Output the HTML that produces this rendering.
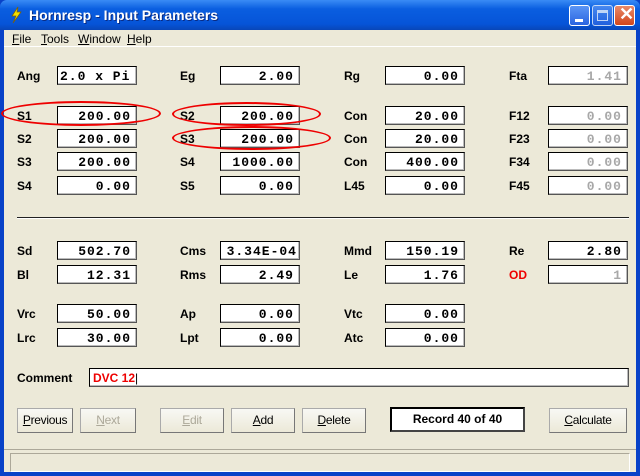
<!DOCTYPE html>
<html><head><style>
*{margin:0;padding:0;box-sizing:border-box}
body{width:640px;height:476px;overflow:hidden;background:#0842c8;font-family:"Liberation Sans",Arial,sans-serif;position:relative}
.title{position:absolute;left:0;top:0;width:640px;height:30px;background:linear-gradient(#3a8cf5,#0a5ee0 30%,#0654d8 80%,#0846b8);border-radius:7px 7px 0 0}
.title span{position:absolute;left:29px;top:7px;color:#fff;font-weight:bold;font-size:14px;text-shadow:1px 1px #0a2a80}
.win{position:absolute;left:4px;top:30px;width:632px;height:442px;background:#ece9d8}
.menu{position:absolute;left:4px;top:30px;width:632px;height:17px;font-size:12px;border-bottom:1px solid #fff}
.menu span{position:absolute;top:2px}
.lbl{position:absolute;font-weight:bold;font-size:12px;color:#000}
.box{position:absolute;width:80px;height:19px;background:#fff;border:1px solid #000;border-right-color:#555;border-bottom-color:#555;font-family:"Liberation Mono",monospace;font-weight:bold;font-size:13px;text-align:right;padding-right:5px;line-height:19px;letter-spacing:1px;white-space:nowrap;overflow:hidden;box-shadow:inset -1px -1px #bbb}
.g{color:#a8a8a8}
.btn{position:absolute;top:408px;height:25px;background:linear-gradient(#f8f8f4,#ece9d8);border:1px solid #aaa;border-right-color:#777;border-bottom-color:#777;font-size:12px;text-align:center;line-height:23px;letter-spacing:-0.3px}
.dis{color:#aca899}
.ell{position:absolute;border:2px solid #e00;border-radius:50%}
.tb{position:absolute;top:5px;width:21px;height:21px;border:1px solid #fff;border-radius:3px;background:linear-gradient(#5a95f5,#2a64e0)}
</style></head><body>
<div class="title"><svg style="position:absolute;left:9px;top:6px" width="14" height="18"><path d="M9 1 L3 10 L7 10 L4 17 L12 6 L8 6 Z" fill="#f5e000" stroke="#806000" stroke-width="0.7"/></svg><span>Hornresp - Input Parameters</span>
<div class="tb" style="left:569px"><div style="position:absolute;left:5px;top:13px;width:8px;height:3px;background:#fff"></div></div>
<div class="tb" style="left:592px;opacity:.75"><div style="position:absolute;left:4px;top:4px;width:11px;height:11px;border:1px solid #fff;border-top-width:3px"></div></div>
<div class="tb" style="left:614px;background:linear-gradient(#e88a6a,#d2461c)"><span style="position:absolute;left:4px;top:-2px;color:#fff;font-size:18px;text-shadow:none;font-weight:bold">✕</span></div>
</div>
<div class="win"></div>
<div class="menu"><span style="left:8px"><u>F</u>ile</span><span style="left:37px"><u>T</u>ools</span><span style="left:74px"><u>W</u>indow</span><span style="left:123px"><u>H</u>elp</span></div>

<div class="lbl" style="left:17px;top:69px">Ang</div><div class="box" style="left:57px;top:66px;text-align:left;padding-left:2px">2.0 x Pi</div>
<div class="lbl" style="left:180px;top:69px">Eg</div><div class="box" style="left:220px;top:66px">2.00</div>
<div class="lbl" style="left:344px;top:69px">Rg</div><div class="box" style="left:385px;top:66px">0.00</div>
<div class="lbl" style="left:509px;top:69px">Fta</div><div class="box g" style="left:548px;top:66px">1.41</div>

<div class="lbl" style="left:17px;top:109px">S1</div><div class="box" style="left:57px;top:106px">200.00</div>
<div class="lbl" style="left:180px;top:109px">S2</div><div class="box" style="left:220px;top:106px">200.00</div>
<div class="lbl" style="left:344px;top:109px">Con</div><div class="box" style="left:385px;top:106px">20.00</div>
<div class="lbl" style="left:509px;top:109px">F12</div><div class="box g" style="left:548px;top:106px">0.00</div>

<div class="lbl" style="left:17px;top:132px">S2</div><div class="box" style="left:57px;top:129px">200.00</div>
<div class="lbl" style="left:180px;top:132px">S3</div><div class="box" style="left:220px;top:129px">200.00</div>
<div class="lbl" style="left:344px;top:132px">Con</div><div class="box" style="left:385px;top:129px">20.00</div>
<div class="lbl" style="left:509px;top:132px">F23</div><div class="box g" style="left:548px;top:129px">0.00</div>

<div class="lbl" style="left:17px;top:155px">S3</div><div class="box" style="left:57px;top:152px">200.00</div>
<div class="lbl" style="left:180px;top:155px">S4</div><div class="box" style="left:220px;top:152px">1000.00</div>
<div class="lbl" style="left:344px;top:155px">Con</div><div class="box" style="left:385px;top:152px">400.00</div>
<div class="lbl" style="left:509px;top:155px">F34</div><div class="box g" style="left:548px;top:152px">0.00</div>

<div class="lbl" style="left:17px;top:179px">S4</div><div class="box" style="left:57px;top:176px">0.00</div>
<div class="lbl" style="left:180px;top:179px">S5</div><div class="box" style="left:220px;top:176px">0.00</div>
<div class="lbl" style="left:344px;top:179px">L45</div><div class="box" style="left:385px;top:176px">0.00</div>
<div class="lbl" style="left:509px;top:179px">F45</div><div class="box g" style="left:548px;top:176px">0.00</div>

<div style="position:absolute;left:17px;top:217px;width:612px;height:2px;border-top:1px solid #222;border-bottom:1px solid #fff"></div>

<div class="lbl" style="left:17px;top:244px">Sd</div><div class="box" style="left:57px;top:241px">502.70</div>
<div class="lbl" style="left:180px;top:244px">Cms</div><div class="box" style="left:220px;top:241px;padding-right:2px">3.34E-04</div>
<div class="lbl" style="left:344px;top:244px">Mmd</div><div class="box" style="left:385px;top:241px">150.19</div>
<div class="lbl" style="left:509px;top:244px">Re</div><div class="box" style="left:548px;top:241px">2.80</div>

<div class="lbl" style="left:17px;top:268px">Bl</div><div class="box" style="left:57px;top:265px">12.31</div>
<div class="lbl" style="left:180px;top:268px">Rms</div><div class="box" style="left:220px;top:265px">2.49</div>
<div class="lbl" style="left:344px;top:268px">Le</div><div class="box" style="left:385px;top:265px">1.76</div>
<div class="lbl" style="left:509px;top:268px;color:#e00">OD</div><div class="box g" style="left:548px;top:265px">1</div>

<div class="lbl" style="left:17px;top:307px">Vrc</div><div class="box" style="left:57px;top:304px">50.00</div>
<div class="lbl" style="left:180px;top:307px">Ap</div><div class="box" style="left:220px;top:304px">0.00</div>
<div class="lbl" style="left:344px;top:307px">Vtc</div><div class="box" style="left:385px;top:304px">0.00</div>

<div class="lbl" style="left:17px;top:331px">Lrc</div><div class="box" style="left:57px;top:328px">30.00</div>
<div class="lbl" style="left:180px;top:331px">Lpt</div><div class="box" style="left:220px;top:328px">0.00</div>
<div class="lbl" style="left:344px;top:331px">Atc</div><div class="box" style="left:385px;top:328px">0.00</div>

<div class="lbl" style="left:17px;top:371px">Comment</div>
<div class="box" style="left:89px;top:368px;width:540px;text-align:left;font-family:'Liberation Sans',Arial,sans-serif;font-size:12px;color:#e00;letter-spacing:0;padding-left:3px">DVC 12<span style="color:#000;font-weight:normal">|</span></div>

<div class="btn" style="left:17px;width:56px"><u>P</u>revious</div>
<div class="btn dis" style="left:80px;width:56px"><u>N</u>ext</div>
<div class="btn dis" style="left:160px;width:64px"><u>E</u>dit</div>
<div class="btn" style="left:231px;width:64px"><u>A</u>dd</div>
<div class="btn" style="left:302px;width:64px"><u>D</u>elete</div>
<div style="position:absolute;left:390px;top:407px;width:135px;height:25px;background:#fff;border:2px solid #000;border-right-color:#444;border-bottom-color:#444;font-weight:bold;font-size:12px;text-align:center;line-height:21px">Record 40 of 40</div>
<div class="btn" style="left:549px;width:78px"><u>C</u>alculate</div>

<div style="position:absolute;left:4px;top:449px;width:632px;height:1px;background:#fff;border-top:1px solid #aca899"></div>
<div style="position:absolute;left:10px;top:453px;width:620px;height:19px;border:1px solid #aca899;border-right-color:#fff;border-bottom-color:#fff"></div>

<div class="ell" style="left:1px;top:101px;width:160px;height:25px"></div>
<div class="ell" style="left:172px;top:102px;width:149px;height:24px"></div>
<div class="ell" style="left:172px;top:126px;width:159px;height:24px"></div>
</body></html>
